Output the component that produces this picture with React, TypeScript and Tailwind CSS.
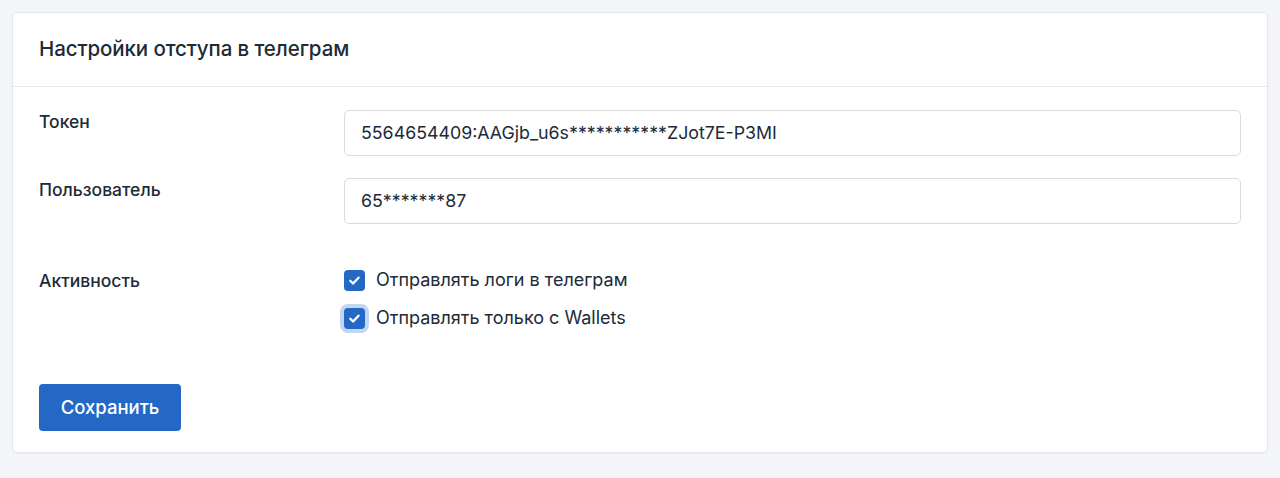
import React from "react";

function Check({ focus }: { focus?: boolean }) {
  return (
    <span
      className={`flex h-[21px] w-[21px] shrink-0 items-center justify-center rounded-[4px] bg-[#2468c6] ${
        focus ? "ring-[4px] ring-[#c4d5ef]" : ""
      }`}
    >
      <svg width="15" height="15" viewBox="0 0 16 16" fill="none">
        <path d="M3.5 8.3l3 2.9 5.8-6.2" stroke="white" strokeWidth="2.5" strokeLinecap="round" strokeLinejoin="round" />
      </svg>
    </span>
  );
}

export default function App() {
  return (
    <div className="min-h-[478px] bg-[#f4f5f9] p-3 font-['Inter',sans-serif] text-[#212a37]">
      <div className="rounded-[5px] border border-[#e3e6ec] bg-white shadow-[0_1px_2px_rgba(0,0,0,0.04)]">
        <div className="flex h-[74px] items-center border-b border-[#e5e8ee] px-[26px]">
          <h1 className="text-[20.5px] font-medium tracking-[-0.1px]">Настройки отступа в телеграм</h1>
        </div>
        <div className="px-[26px] pt-[23px] pb-[21px]">
          <div className="grid grid-cols-[305px_1fr] gap-y-[22px]">
            <label className="pt-[1px] text-[17.5px] font-medium leading-[22px]">Токен</label>
            <div className="flex h-[46px] items-center rounded-[5px] border border-[#d7dbe2] px-4 text-[17.8px]">
              5564654409:AAGjb_u6s***********ZJot7E-P3MI
            </div>
            <label className="pt-[1px] text-[17.5px] font-medium leading-[22px]">Пользователь</label>
            <div className="flex h-[46px] items-center rounded-[5px] border border-[#d7dbe2] px-4 text-[17.8px]">
              65*******87
            </div>
          </div>
          <div className="mt-[45px] grid grid-cols-[305px_1fr]">
            <div className="text-[17.5px] font-medium leading-[22px] pt-[1px]">Активность</div>
            <div className="flex flex-col gap-[16px]">
              <div className="flex items-center gap-[11px] text-[18px] leading-[22px]">
                <Check />
                <span>Отправлять логи в телеграм</span>
              </div>
              <div className="flex items-center gap-[11px] text-[18px] leading-[22px]">
                <Check focus />
                <span>Отправлять только с Wallets</span>
              </div>
            </div>
          </div>
          <button className="mt-[55px] h-[47px] w-[142px] rounded-[4px] bg-[#2468c6] text-[18.5px] font-medium text-white">
            Сохранить
          </button>
        </div>
      </div>
    </div>
  );
}
